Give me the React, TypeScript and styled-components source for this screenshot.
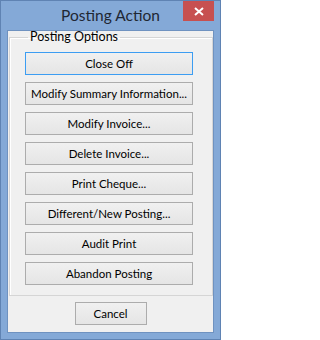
import styled, { createGlobalStyle } from 'styled-components';

const GlobalStyle = createGlobalStyle`
  html, body {
    margin: 0;
    padding: 0;
    background: #ffffff;
  }
  body {
    font-family: Lato, 'Noto Sans', Arial, sans-serif;
  }
`;

const Window = styled.div`
  box-sizing: border-box;
  width: 221px;
  height: 340px;
  display: flex;
  flex-direction: column;
  background: #84a9d7;
  border: 1px solid #5f83b3;
`;

const TitleBar = styled.div`
  height: 29px;
  display: grid;
  grid-template-columns: 1fr auto 1fr;
  align-items: start;
`;

const Title = styled.div`
  grid-column: 2;
  padding-top: 5px;
  font-size: 15.5px;
  line-height: 19px;
  color: #1f2733;
  white-space: nowrap;
`;

const CloseButton = styled.div`
  grid-column: 3;
  justify-self: end;
  margin-right: 6px;
  width: 31px;
  height: 20px;
  display: flex;
  align-items: center;
  justify-content: center;
  background: #c75050;
`;

const Client = styled.div`
  flex: 1;
  margin: 0 6px 6px 6px;
  border: 1px solid #6f92c0;
  background: #f0f0f0;
  display: flex;
  flex-direction: column;
`;

const GroupBox = styled.fieldset`
  margin: 0 0 0 1px;
  padding: 9px 0 10px 15px;
  border: 1px solid #d5d5d5;
  box-shadow: inset 1px 1px 0 #ffffff;
  display: flex;
  flex-direction: column;
  min-width: 0;
`;

const Legend = styled.legend`
  margin-left: 3px;
  padding: 0 2px;
  font-size: 12.5px;
  line-height: 12px;
  color: #000000;
`;

const ButtonList = styled.div`
  display: flex;
  flex-direction: column;
  gap: 7px;
`;

const Button = styled.button<{ $focused?: boolean; $width?: number }>`
  box-sizing: border-box;
  width: ${(p) => p.$width ?? 168}px;
  height: 23px;
  padding: 0;
  font-family: Lato, 'Noto Sans', Arial, sans-serif;
  font-size: 11.5px;
  color: #000000;
  border: 1px solid ${(p) => (p.$focused ? '#3c9df2' : '#acacac')};
  background: linear-gradient(#f0f0f0, #e5e5e5);
  white-space: nowrap;
`;

const Footer = styled.div`
  flex: 1;
  display: flex;
  justify-content: center;
  align-items: flex-start;
  padding-top: 6px;
`;

const actions = [
  'Close Off',
  'Modify Summary Information...',
  'Modify Invoice...',
  'Delete Invoice...',
  'Print Cheque...',
  'Different/New Posting...',
  'Audit Print',
  'Abandon Posting',
];

function CloseIcon() {
  return (
    <svg width="10" height="9" viewBox="0 0 10 9">
      <path d="M1 1 L9 8 M9 1 L1 8" stroke="#ffffff" strokeWidth="2" />
    </svg>
  );
}

export default function App() {
  return (
    <>
      <GlobalStyle />
      <Window>
        <TitleBar>
          <Title>Posting Action</Title>
          <CloseButton>
            <CloseIcon />
          </CloseButton>
        </TitleBar>
        <Client>
          <GroupBox>
            <Legend>Posting Options</Legend>
            <ButtonList>
              {actions.map((label, i) => (
                <Button key={label} $focused={i === 0}>
                  {label}
                </Button>
              ))}
            </ButtonList>
          </GroupBox>
          <Footer>
            <Button $width={72}>Cancel</Button>
          </Footer>
        </Client>
      </Window>
    </>
  );
}
